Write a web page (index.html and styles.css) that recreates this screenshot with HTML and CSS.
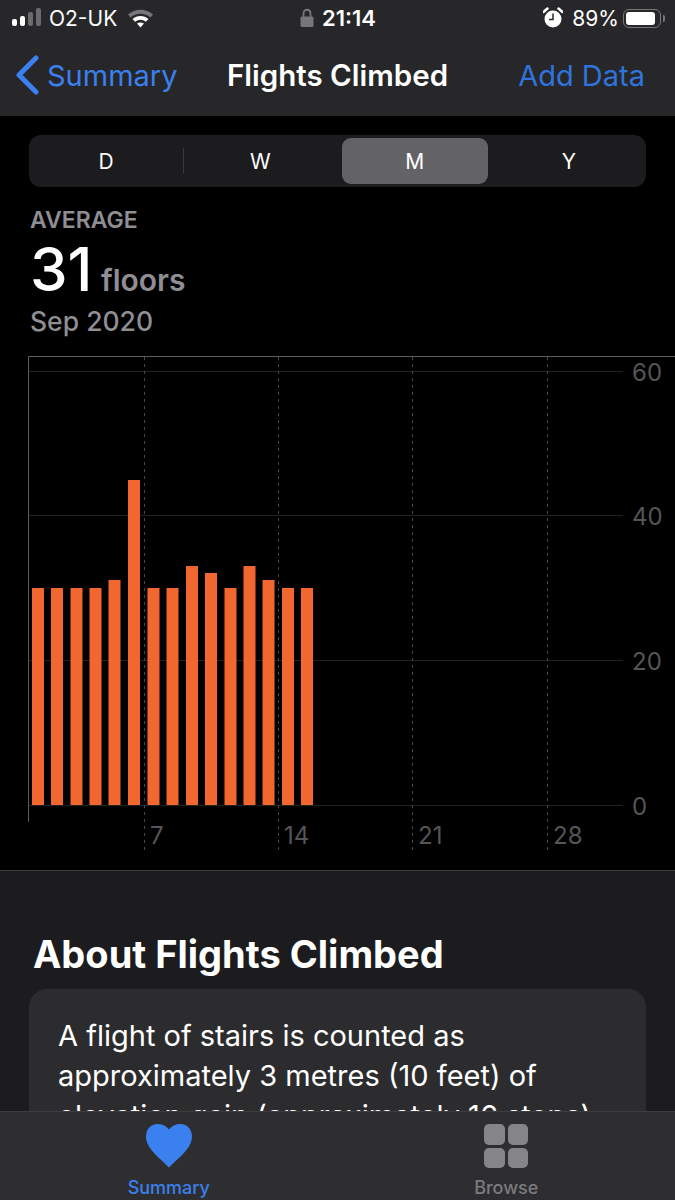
FILE: index.html
```html
<!DOCTYPE html>
<html lang="en">
<head>
  <meta charset="UTF-8">
  <meta name="viewport" content="width=device-width, initial-scale=1.0">
  <title>Flights Climbed</title>
  <link rel="stylesheet" href="styles.css">
</head>
<body>
  <div id="screen">
    <header id="top-bar">
      <div class="status">
        <div class="status-left">
          <svg class="signal" width="33" height="24" viewBox="0 0 33 24">
            <rect x="1" y="13" width="5" height="7" rx="2" fill="#fff"/>
            <rect x="9" y="10" width="5" height="10" rx="2" fill="#fff"/>
            <rect x="17" y="6" width="5" height="14" rx="2" fill="#6b6b6d"/>
            <rect x="25" y="2" width="5" height="18" rx="2" fill="#6b6b6d"/>
          </svg>
          <span>O2-UK</span>
          <svg class="wifi" width="27" height="24" viewBox="0 0 27 24">
            <path d="M1 8.500C8 2 19 2 26 8.500L23.400 11.400C17.600 6.400 9.400 6.400 3.600 11.400Z" fill="#77777a"/>
            <path d="M5.500 13C10 9 17 9 21.500 13L18.900 15.700C15.500 13 11.500 13 8.100 15.700Z" fill="#fff"/>
            <path d="M10 17.500C12 16 15 16 17 17.500L13.500 21.500Z" fill="#fff"/>
          </svg>
        </div>
        <div class="status-mid">
          <svg width="14" height="20" viewBox="0 0 14 20">
            <path d="M3.500 9V5.500C3.500 0.500 10.500 0.500 10.500 5.500V9" fill="none" stroke="#77777a" stroke-width="1.800"/>
            <rect x="0.500" y="8.500" width="13" height="10.500" rx="1.500" fill="#77777a"/>
          </svg>
          <span>21:14</span>
        </div>
        <div class="status-right">
          <svg width="20" height="22" viewBox="0 0 20 22">
            <circle cx="10" cy="12" r="8.500" fill="#fff"/>
            <path d="M10 6.500V12.500H6" fill="none" stroke="#272729" stroke-width="1.500"/>
            <path d="M0.500 5L4.500 1.500M19.500 5L15.500 1.500" stroke="#fff" stroke-width="2.500" stroke-linecap="round"/>
          </svg>
          <span>89%</span>
          <div class="battery"><div class="battery-level"></div></div>
          <div class="battery-cap"></div>
        </div>
      </div>
      <nav class="nav">
        <a class="nav-back">
          <svg width="24" height="40" viewBox="0 0 24 40">
            <path d="M21 3L4 20L21 37" fill="none" stroke="#3a80ee" stroke-width="5" stroke-linecap="round" stroke-linejoin="round"/>
          </svg>
          <span>Summary</span>
        </a>
        <div class="nav-title">Flights Climbed</div>
        <a class="nav-action">Add Data</a>
      </nav>
    </header>

    <main id="content">
      <section class="chart-panel">
        <div class="segments">
          <div class="segment">D</div>
          <div class="segment seg-divided">W</div>
          <div class="segment selected">M</div>
          <div class="segment">Y</div>
        </div>

        <div class="summary">
          <div class="summary-label">AVERAGE</div>
          <div class="summary-value"><span class="big">31</span> <span class="unit">floors</span></div>
          <div class="summary-date">Sep 2020</div>
        </div>

        <svg class="chart" width="675" height="514" viewBox="0 356 675 514">
          <g class="grid">
            <line x1="29" y1="371.500" x2="623" y2="371.500"/>
            <line x1="29" y1="515.500" x2="623" y2="515.500"/>
            <line x1="29" y1="660.500" x2="623" y2="660.500"/>
            <line x1="29" y1="805.500" x2="623" y2="805.500"/>
          </g>
          <line class="frame" x1="28" y1="356.500" x2="675" y2="356.500"/>
          <line class="frame" x1="28.500" y1="356" x2="28.500" y2="822"/>
          <g class="days">
            <line x1="144.500" y1="357" x2="144.500" y2="850"/>
            <line x1="278.500" y1="357" x2="278.500" y2="850"/>
            <line x1="412.500" y1="357" x2="412.500" y2="850"/>
            <line x1="547.500" y1="357" x2="547.500" y2="850"/>
          </g>
          <g class="bars">
            <rect x="32" y="588" width="12" height="217"/>
            <rect x="51" y="588" width="12" height="217"/>
            <rect x="70.500" y="588" width="12" height="217"/>
            <rect x="89.500" y="588" width="12" height="217"/>
            <rect x="108.500" y="580" width="12" height="225"/>
            <rect x="128" y="480" width="12" height="325"/>
            <rect x="147.500" y="588" width="12" height="217"/>
            <rect x="166.500" y="588" width="12" height="217"/>
            <rect x="186" y="566" width="12" height="239"/>
            <rect x="205" y="573" width="12" height="232"/>
            <rect x="224.500" y="588" width="12" height="217"/>
            <rect x="243.500" y="566" width="12" height="239"/>
            <rect x="262.500" y="580" width="12" height="225"/>
            <rect x="282" y="588" width="12" height="217"/>
            <rect x="301" y="588" width="12" height="217"/>
          </g>
          <g class="axis">
            <text x="632" y="381">60</text>
            <text x="632" y="525">40</text>
            <text x="632" y="670">20</text>
            <text x="632" y="815">0</text>
            <text x="150" y="844">7</text>
            <text x="284" y="844">14</text>
            <text x="418" y="844">21</text>
            <text x="553" y="844">28</text>
          </g>
        </svg>
      </section>

      <section class="about">
        <h2>About Flights Climbed</h2>
        <div class="about-card">
          A flight of stairs is counted as approximately 3 metres (10 feet) of elevation gain (approximately 16 steps).
        </div>
      </section>
    </main>

    <footer id="tab-bar">
      <div class="tab tab-active">
        <svg width="46" height="44" viewBox="0 0 46 44">
          <path d="M23 43.500C15 35 0 25 0 12.500C0 5 5 0 11.500 0C16.500 0 20.500 2 23 5.500C25.500 2 29.500 0 34.500 0C41 0 46 5 46 12.500C46 25 31 35 23 43.500Z" fill="#3a80ee"/>
        </svg>
        <span>Summary</span>
      </div>
      <div class="tab">
        <div class="browse-icon">
          <i></i><i></i><i></i><i></i>
        </div>
        <span>Browse</span>
      </div>
    </footer>
  </div>
</body>
</html>
```

FILE: styles.css
```css
body {
  margin: 0;
  padding: 0;
  font-family: Inter, "Liberation Sans", sans-serif;
  background-color: #000;
  color: #fff;
  overflow: hidden;
}

#screen {
  width: 675px;
  height: 1200px;
  display: flex;
  flex-direction: column;
  overflow: hidden;
}

/* Status + nav */
#top-bar {
  height: 116px;
  flex-shrink: 0;
  background-color: #272729;
}

.status {
  height: 36px;
  padding: 0 10px 0 11px;
  display: grid;
  grid-template-columns: 1fr auto 1fr;
  align-items: center;
  font-size: 21px;
}

.status-left {
  display: flex;
  align-items: center;
  gap: 5px;
}

.status-left .wifi {
  margin-left: 5px;
}

.status-mid {
  display: flex;
  align-items: center;
  gap: 8px;
  font-size: 22px;
  font-weight: 600;
}

.status-right {
  display: flex;
  align-items: center;
  justify-content: flex-end;
}

.status-right span {
  margin-left: 9px;
}

.battery {
  width: 32px;
  height: 13px;
  margin-left: 4px;
  padding: 2px;
  border: 1.500px solid #77777a;
  border-radius: 6px;
  display: flex;
}

.battery-level {
  width: 90%;
  background-color: #fff;
  border-radius: 3px;
}

.battery-cap {
  width: 2px;
  height: 7px;
  margin-left: 2px;
  background-color: #77777a;
  border-radius: 0 2px 2px 0;
}

.nav {
  height: 78px;
  padding: 0 30px;
  display: grid;
  grid-template-columns: 1fr auto 1fr;
  align-items: center;
  font-size: 29px;
}

.nav-back {
  display: flex;
  align-items: center;
  gap: 8px;
  margin-left: -15px;
  color: #3a80ee;
}

.nav-title {
  font-size: 29.500px;
  font-weight: 600;
}

.nav-action {
  color: #2f74dd;
  text-align: right;
}

/* Main area */
#content {
  flex: 1;
  min-height: 0;
  overflow: hidden;
  background-color: #1c1c1e;
}

.chart-panel {
  background-color: #000;
  padding-top: 19px;
  border-bottom: 1px solid #3a3a3c;
}

.segments {
  margin: 0 29px;
  height: 52px;
  padding: 3px 0;
  box-sizing: border-box;
  background-color: #1c1c1e;
  border-radius: 12px;
  display: grid;
  grid-template-columns: repeat(4, 1fr);
}

.segment {
  display: flex;
  align-items: center;
  justify-content: center;
  font-size: 21px;
  position: relative;
}

.seg-divided::before {
  content: "";
  position: absolute;
  left: 0;
  top: 10px;
  bottom: 10px;
  width: 1px;
  background-color: #3a3a3c;
}

.selected {
  margin: 0 4px;
  background-color: #636366;
  border-radius: 9px;
}

.summary {
  padding: 19px 30px 0;
  height: 169px;
  box-sizing: border-box;
}

.summary-label {
  color: #8e8e93;
  font-size: 23px;
  font-weight: 600;
  line-height: 28px;
}

.summary-value {
  padding-top: 2px;
  line-height: 66px;
  height: 68px;
}

.big {
  font-size: 60px;
  font-weight: 500;
}

.unit {
  color: #8e8e93;
  font-size: 30px;
  font-weight: 600;
  margin-left: 4px;
}

.summary-date {
  color: #8e8e93;
  font-size: 26.500px;
  font-weight: 500;
  line-height: 34px;
}

.chart {
  display: block;
}

.grid line {
  stroke: #222224;
  stroke-width: 1;
}

.frame {
  stroke: #5c5c5e;
  stroke-width: 1;
}

.days line {
  stroke: #48484a;
  stroke-width: 1;
  stroke-dasharray: 3 4;
}

.bars rect {
  fill: #f1672f;
}

.axis text {
  fill: #555557;
  font-size: 24px;
}

/* About */
.about {
  padding: 0 29px;
}

.about h2 {
  margin: 0;
  padding: 60px 4px 12px;
  font-size: 38px;
  line-height: 46px;
  font-weight: 700;
}

.about-card {
  background-color: #2c2c2e;
  border-radius: 18px;
  padding: 27px 29px;
  font-size: 29px;
  line-height: 40px;
}

/* Tab bar */
#tab-bar {
  height: 88px;
  flex-shrink: 0;
  background-color: #2e2e30;
  border-top: 1px solid #3d3d3f;
  display: grid;
  grid-template-columns: 1fr 1fr;
}

.tab {
  display: flex;
  flex-direction: column;
  align-items: center;
  padding-top: 12px;
  color: #7b7b7d;
  font-size: 18px;
  font-weight: 500;
}

.tab span {
  margin-top: 9px;
}

.tab-active {
  color: #3a80ee;
}

.browse-icon {
  width: 44px;
  height: 44px;
  display: grid;
  grid-template-columns: 1fr 1fr;
  gap: 3px;
}

.browse-icon i {
  background-color: #858587;
  border-radius: 5px;
}
```
